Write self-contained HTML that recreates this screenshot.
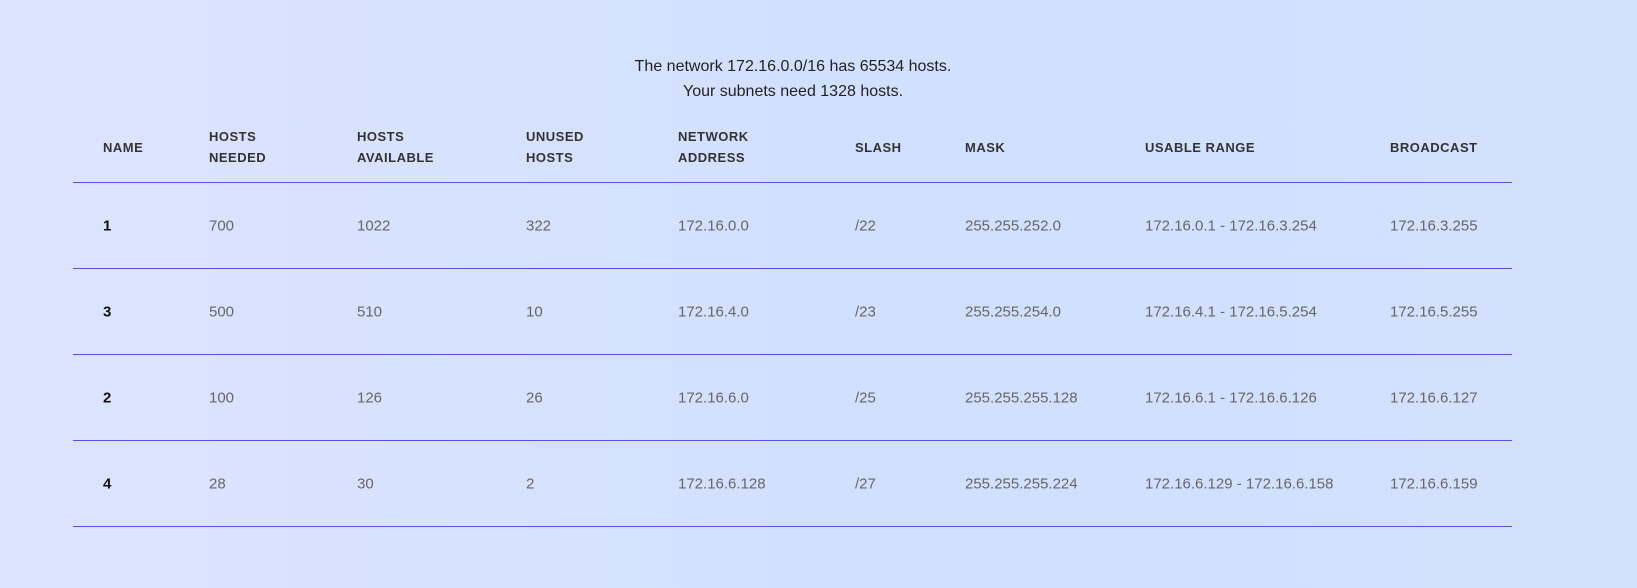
<!DOCTYPE html>
<html><head><meta charset="utf-8"><style>
body{margin:0;width:1637px;height:588px;overflow:hidden;background:linear-gradient(90deg,#dce4ff 0%,#d2e0ff 50%,#d3e1ff 100%);font-family:"Liberation Sans",sans-serif;position:relative}
.t{position:absolute;left:0;width:1586px;text-align:center;font-size:16px;color:#222}
.h{position:absolute;font-size:13px;font-weight:bold;color:#333;letter-spacing:0.5px;line-height:21px}
.line{position:absolute;left:73px;width:1439px;height:1px;background:#5a4fe0}
.c{position:absolute;font-size:15px;color:#666;transform:translateY(-50%)}
.n{color:#111;font-weight:bold}
</style></head><body>
<div class="t" style="top:58px">The network 172.16.0.0/16 has 65534 hosts.</div>
<div class="t" style="top:83px">Your subnets need 1328 hosts.</div>
<div class="h" style="left:103px;top:137px">NAME</div>
<div class="h" style="left:209px;top:126px">HOSTS<br>NEEDED</div>
<div class="h" style="left:357px;top:126px">HOSTS<br>AVAILABLE</div>
<div class="h" style="left:526px;top:126px">UNUSED<br>HOSTS</div>
<div class="h" style="left:678px;top:126px">NETWORK<br>ADDRESS</div>
<div class="h" style="left:855px;top:137px">SLASH</div>
<div class="h" style="left:965px;top:137px">MASK</div>
<div class="h" style="left:1145px;top:137px">USABLE RANGE</div>
<div class="h" style="left:1390px;top:137px">BROADCAST</div>
<div class="line" style="top:182px"></div>
<div class="line" style="top:268px"></div>
<div class="line" style="top:354px"></div>
<div class="line" style="top:440px"></div>
<div class="line" style="top:526px"></div>

<div class="c n" style="left:103px;top:226px">1</div><div class="c" style="left:209px;top:226px">700</div><div class="c" style="left:357px;top:226px">1022</div><div class="c" style="left:526px;top:226px">322</div><div class="c" style="left:678px;top:226px">172.16.0.0</div><div class="c" style="left:855px;top:226px">/22</div><div class="c" style="left:965px;top:226px">255.255.252.0</div><div class="c" style="left:1145px;top:226px">172.16.0.1 - 172.16.3.254</div><div class="c" style="left:1390px;top:226px">172.16.3.255</div>

<div class="c n" style="left:103px;top:312px">3</div><div class="c" style="left:209px;top:312px">500</div><div class="c" style="left:357px;top:312px">510</div><div class="c" style="left:526px;top:312px">10</div><div class="c" style="left:678px;top:312px">172.16.4.0</div><div class="c" style="left:855px;top:312px">/23</div><div class="c" style="left:965px;top:312px">255.255.254.0</div><div class="c" style="left:1145px;top:312px">172.16.4.1 - 172.16.5.254</div><div class="c" style="left:1390px;top:312px">172.16.5.255</div>

<div class="c n" style="left:103px;top:398px">2</div><div class="c" style="left:209px;top:398px">100</div><div class="c" style="left:357px;top:398px">126</div><div class="c" style="left:526px;top:398px">26</div><div class="c" style="left:678px;top:398px">172.16.6.0</div><div class="c" style="left:855px;top:398px">/25</div><div class="c" style="left:965px;top:398px">255.255.255.128</div><div class="c" style="left:1145px;top:398px">172.16.6.1 - 172.16.6.126</div><div class="c" style="left:1390px;top:398px">172.16.6.127</div>

<div class="c n" style="left:103px;top:484px">4</div><div class="c" style="left:209px;top:484px">28</div><div class="c" style="left:357px;top:484px">30</div><div class="c" style="left:526px;top:484px">2</div><div class="c" style="left:678px;top:484px">172.16.6.128</div><div class="c" style="left:855px;top:484px">/27</div><div class="c" style="left:965px;top:484px">255.255.255.224</div><div class="c" style="left:1145px;top:484px">172.16.6.129 - 172.16.6.158</div><div class="c" style="left:1390px;top:484px">172.16.6.159</div>
</body></html>
